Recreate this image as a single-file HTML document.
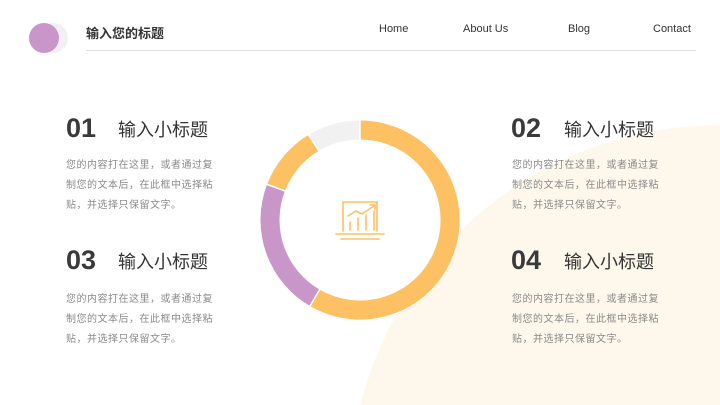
<!DOCTYPE html>
<html><head><meta charset="utf-8"><style>
*{margin:0;padding:0;box-sizing:border-box}
html,body{width:720px;height:405px;overflow:hidden}
body{background:#fff;position:relative;font-family:"Liberation Sans","Noto Sans CJK SC",sans-serif}
.a{position:absolute;white-space:nowrap}
.nav{font-size:11px;color:#333;top:23px}
.num{font-size:27px;font-weight:bold;color:#3a3a3a}
.h{font-size:18px;color:#333}
.p{font-size:10px;color:#8a8a8a;line-height:20px;letter-spacing:0.5px}
</style></head><body>
<svg class="a" style="left:0;top:0" width="720" height="405">
<circle cx="720" cy="496" r="371" fill="#fef8ec"/>
<circle cx="53" cy="38" r="15" fill="#f1f1f3"/>
<circle cx="44" cy="38" r="15" fill="#c896c8"/>
<line x1="86" y1="50.5" x2="696" y2="50.5" stroke="#dedede" stroke-width="1"/>
<g fill="none" stroke-width="19">
<path d="M360 130 A90 90 0 1 1 315 297.9" stroke="#fdc062"/>
<path d="M315 297.9 A90 90 0 0 1 276 187.7" stroke="#c896c8"/>
<path d="M276 187.7 A90 90 0 0 1 313.6 142.9" stroke="#fdc062"/>
<path d="M313.6 142.9 A90 90 0 0 1 360 130" stroke="#f1f1f1"/>
</g>
<g stroke="#fff" stroke-width="1.5"><line x1="360" y1="120" x2="360" y2="140"/><line x1="310" y1="306" x2="320" y2="289"/><line x1="266" y1="184" x2="285" y2="191"/><line x1="308" y1="134" x2="319" y2="151"/></g>
<g fill="none" stroke="#fdc062" stroke-width="1.6" stroke-linecap="round">
<path d="M343 231 V202 h34 v29"/>
<line x1="336" y1="234" x2="384" y2="234"/>
<line x1="341" y1="239" x2="379" y2="239"/>
<path d="M348 216 l8 -5 l6 3 l12 -8"/><path d="M370 205 h5 v4"/>
<line x1="350" y1="222" x2="350" y2="230"/><line x1="358" y1="218" x2="358" y2="230"/><line x1="366" y1="215" x2="366" y2="230"/><line x1="374" y1="211" x2="374" y2="230"/>
</g>
</svg>
<div class="a" style="left:86px;top:23px;font-size:13px;font-weight:bold;color:#333">输入您的标题</div>
<div class="a nav" style="left:379px">Home</div>
<div class="a nav" style="left:463px">About Us</div>
<div class="a nav" style="left:568px">Blog</div>
<div class="a nav" style="left:653px">Contact</div>

<div class="a num" style="left:66px;top:113px">01</div>
<div class="a h" style="left:118px;top:116px">输入小标题</div>
<div class="a p" style="left:66px;top:156px">您的内容打在这里，或者通过复<br>制您的文本后，在此框中选择粘<br>贴，并选择只保留文字。</div>

<div class="a num" style="left:511px;top:113px">02</div>
<div class="a h" style="left:564px;top:116px">输入小标题</div>
<div class="a p" style="left:512px;top:156px">您的内容打在这里，或者通过复<br>制您的文本后，在此框中选择粘<br>贴，并选择只保留文字。</div>

<div class="a num" style="left:66px;top:245px">03</div>
<div class="a h" style="left:118px;top:248px">输入小标题</div>
<div class="a p" style="left:66px;top:290px">您的内容打在这里，或者通过复<br>制您的文本后，在此框中选择粘<br>贴，并选择只保留文字。</div>

<div class="a num" style="left:511px;top:245px">04</div>
<div class="a h" style="left:564px;top:248px">输入小标题</div>
<div class="a p" style="left:512px;top:290px">您的内容打在这里，或者通过复<br>制您的文本后，在此框中选择粘<br>贴，并选择只保留文字。</div>
</body></html>
